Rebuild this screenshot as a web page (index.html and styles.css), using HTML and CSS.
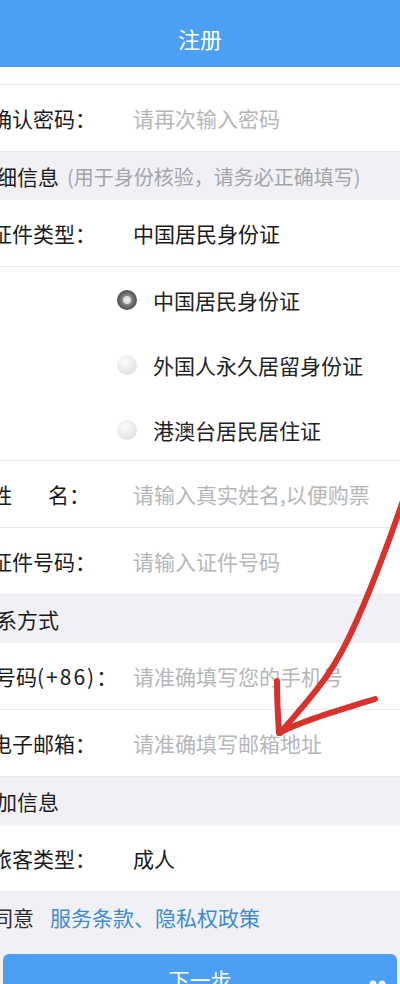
FILE: index.html
```html
<!DOCTYPE html>
<html lang="zh-CN">
<head>
<meta charset="utf-8">
<title>注册</title>
<link rel="stylesheet" href="styles.css">
</head>
<body>
<div class="page">
  <header class="topbar"><h1>注册</h1></header>
  <div class="strip"></div>

  <div class="row"><span class="label">确认密码：</span><span class="placeholder">请再次输入密码</span></div>

  <div class="section"><span class="sec-title">详细信息</span><span class="sec-note">(用于身份核验，请务必正确填写)</span></div>
  <div class="row"><span class="label">证件类型：</span><span class="value">中国居民身份证</span></div>
  <div class="radios">
    <div class="opt"><span class="dot dot-on"></span><span>中国居民身份证</span></div>
    <div class="opt"><span class="dot"></span><span>外国人永久居留身份证</span></div>
    <div class="opt"><span class="dot"></span><span>港澳台居民居住证</span></div>
  </div>
  <div class="row"><span class="label">姓<span class="sp"></span>名：</span><span class="placeholder">请输入真实姓名,以便购票</span></div>
  <div class="row"><span class="label">证件号码：</span><span class="placeholder">请输入证件号码</span></div>

  <div class="section"><span class="sec-title">联系方式</span></div>
  <div class="row"><span class="label label-wide">手机号码<span class="code">(+86)</span>：</span><span class="placeholder">请准确填写您的手机号</span></div>
  <div class="row"><span class="label">电子邮箱：</span><span class="placeholder">请准确填写邮箱地址</span></div>

  <div class="section"><span class="sec-title">附加信息</span></div>
  <div class="row"><span class="label">旅客类型：</span><span class="value">成人</span></div>

  <div class="agree"><span class="agree-pre">同意</span><span class="link">服务条款、隐私权政策</span></div>
  <div class="btn">下一步</div>

  <svg class="scribble" width="400" height="984" viewBox="0 0 400 984" xmlns="http://www.w3.org/2000/svg">
    <path d="M404 498 C397 518 390 538 383 556 C374 580 366 600 357 620 C347 643 338 660 326 677 C313 696 298 712 280 733" fill="none" stroke="#d7322b" stroke-width="6" stroke-linecap="round" stroke-linejoin="round"/>
    <path d="M277 681 C277 700 278 718 279 733 C300 722 330 713 375 699" fill="none" stroke="#d7322b" stroke-width="6" stroke-linecap="round" stroke-linejoin="round"/>
    <circle cx="373" cy="984" r="3.5" fill="#eef4fb"/>
    <circle cx="382" cy="984" r="3.5" fill="#eef4fb"/>
  </svg>
</div>
</body>
</html>
```

FILE: styles.css
```css
html, body {
  margin: 0;
  padding: 0;
}
body {
  width: 400px;
  height: 984px;
  overflow: hidden;
  background: #f1f1f5;
  font-family: "Noto Sans CJK SC", "Noto Sans", sans-serif;
}
.page {
  position: relative;
  width: 400px;
  height: 984px;
  overflow: hidden;
  background: #f1f1f5;
}
.topbar {
  height: 67px;
  box-sizing: border-box;
  padding-top: 9px;
  background: #4d9ff6;
  display: flex;
  align-items: center;
  justify-content: center;
}
.topbar h1 {
  margin: 0;
  font-size: 22px;
  font-weight: 400;
  line-height: 1;
  color: #ffffff;
}
.strip {
  height: 18px;
  box-sizing: border-box;
  background: #ffffff;
  border-bottom: 1px solid #e6e6ea;
}
.row {
  height: 67px;
  box-sizing: border-box;
  background: #ffffff;
  border-bottom: 1px solid #e9e9ec;
  display: flex;
  align-items: center;
  font-size: 21px;
  color: #1a1a1c;
  white-space: nowrap;
}
.label {
  flex: none;
  width: 142px;
  margin-left: -9px;
  white-space: nowrap;
}
.label-wide {
  width: 180px;
  margin-left: -47px;
}
.code {
  letter-spacing: 2px;
}
.sp {
  display: inline-block;
  width: 36px;
}
.placeholder {
  color: #b6b6b9;
}
.value {
  color: #1a1a1c;
}
.section {
  height: 48px;
  box-sizing: border-box;
  background: #f1f1f5;
  display: flex;
  align-items: center;
  white-space: nowrap;
}
.sec-title {
  margin-left: -25px;
  font-size: 21px;
  color: #1a1a1c;
}
.sec-note {
  margin-left: 8px;
  font-size: 20px;
  color: #a4a4a8;
}
.radios {
  height: 194px;
  box-sizing: border-box;
  background: #ffffff;
  border-bottom: 1px solid #e9e9ec;
  display: flex;
  flex-direction: column;
  padding-left: 117px;
}
.opt {
  flex: none;
  height: 65px;
  display: flex;
  align-items: center;
  gap: 16px;
  font-size: 21px;
  color: #222224;
  white-space: nowrap;
}
.dot {
  flex: none;
  width: 20px;
  height: 20px;
  border-radius: 50%;
  background: radial-gradient(circle at 40% 35%, #fbfbfb 0, #ececec 45%, #d6d6d6 100%);
}
.dot-on {
  background: radial-gradient(circle at 50% 50%, #f2f2f2 0, #dcdcdc 3.5px, #8a8a8a 4.5px, #6a6a6a 7px, #4f4f4f 10px);
}
.agree {
  height: 62px;
  box-sizing: border-box;
  padding-top: 12px;
  display: flex;
  align-items: flex-start;
  font-size: 21px;
  line-height: 26px;
  white-space: nowrap;
}
.agree-pre {
  margin-left: -8px;
  color: #2e2e30;
}
.link {
  margin-left: 16px;
  color: #3e8bcc;
}
.btn {
  margin: 0 3px;
  height: 50px;
  border-radius: 6px;
  background: #4d9ff6;
  color: #ffffff;
  font-size: 21px;
  display: flex;
  align-items: center;
  justify-content: center;
}
.scribble {
  position: absolute;
  left: 0;
  top: 0;
  pointer-events: none;
}
```
